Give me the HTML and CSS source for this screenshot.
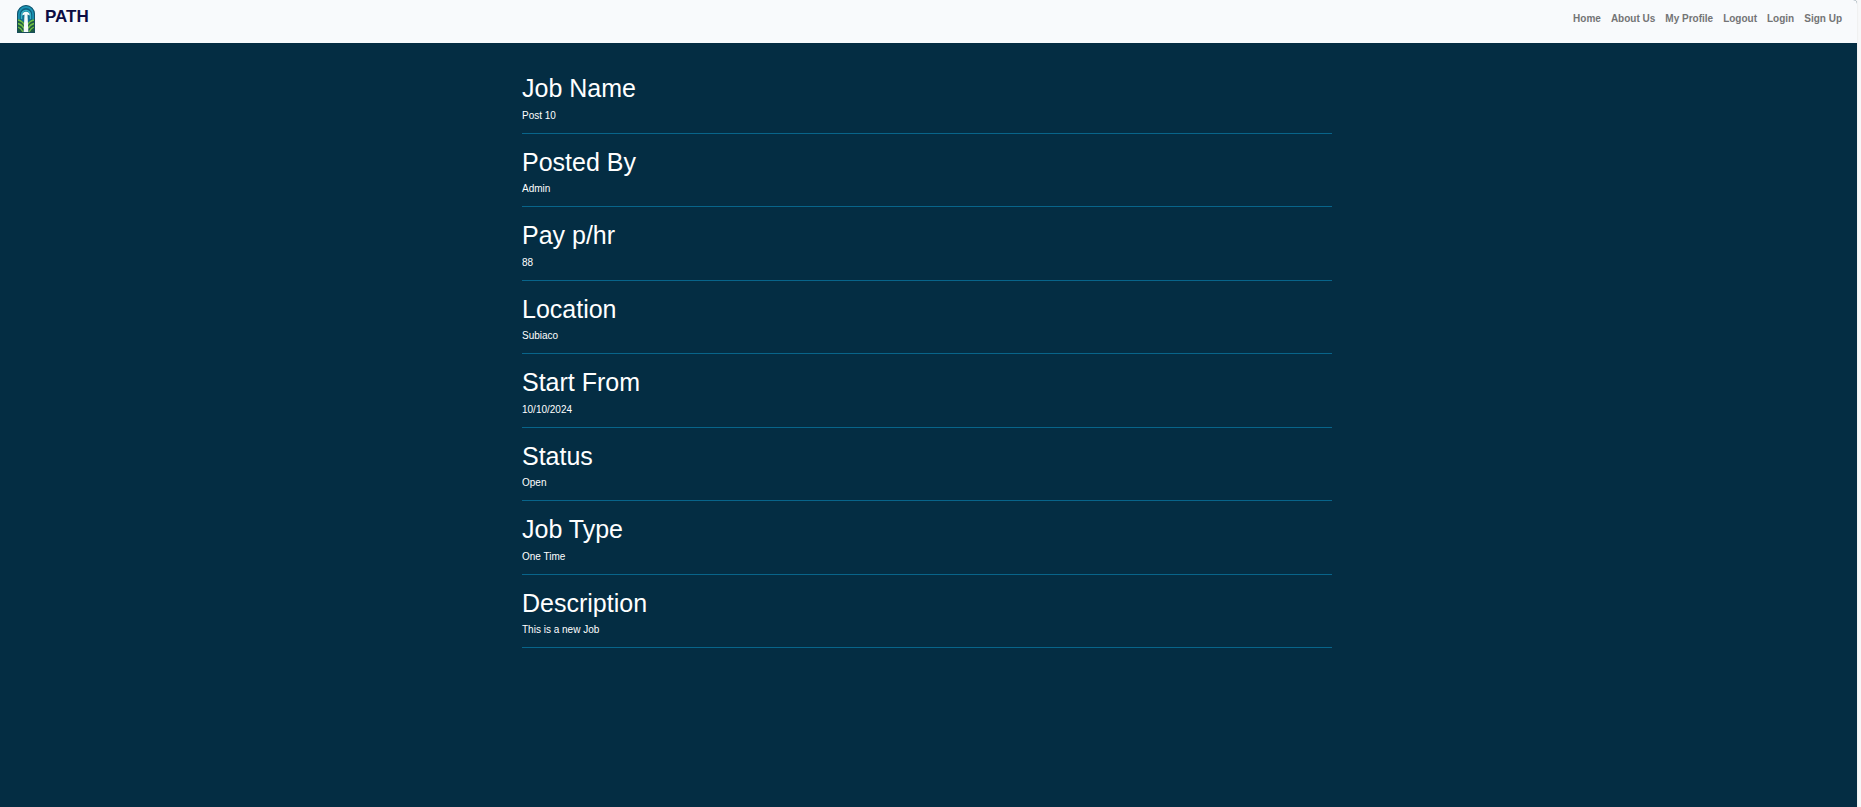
FILE: index.html
```html
<!DOCTYPE html>
<html lang="en">
<head>
<meta charset="utf-8">
<title>PATH</title>
<link rel="stylesheet" href="styles.css">
</head>
<body>
<div class="page">
<header class="navbar">
  <a class="brand" href="#">
    <svg class="logo" viewBox="0 0 18 28" aria-hidden="true">
      <defs><clipPath id="arch"><path d="M0 28V9a9 9 0 0 1 18 0v19z"/></clipPath></defs>
      <g clip-path="url(#arch)">
        <path fill="#12708f" d="M0 0h18v28H0z"/>
        <g fill="none">
          <path stroke="#1b93b4" stroke-width="1.8" d="M2 18V9a7 7 0 0 1 14 0v9"/>
          <path stroke="#0f5574" stroke-width=".7" d="M3.300 15V9.500a5.700 5.700 0 0 1 11.400 0V15"/>
          <path stroke="#35b3c8" stroke-width="1.4" d="M4.500 14V10a4.500 4.500 0 0 1 9 0v4"/>
        </g>
        <path fill="#1d5a44" d="M0 28V14q7 1 9 8 2-7 9-8v14z"/>
        <g fill="none" stroke="#6fc043" stroke-width="1.300">
          <path d="M1 15q5 1 7 6M1 18.500q4 1 6 5M1 22q3 1 5 5M17 15q-5 1-7 6M17 18.500q-4 1-6 5M17 22q-3 1-5 5"/>
        </g>
        <path fill="#f4fbfb" d="M5.300 10.500a3.700 3.700 0 0 1 7.400 0l-2.200-1 .9 17.500H6.600l.9-17.500z"/>
        <path fill="none" stroke="#174a60" stroke-width=".8" d="M.5 28V9a8.500 8.500 0 0 1 17 0v18.500H.5"/>
      </g>
    </svg>
    <span>PATH</span>
  </a>
  <nav class="links">
    <a href="#">Home</a>
    <a href="#">About Us</a>
    <a href="#">My Profile</a>
    <a href="#">Logout</a>
    <a href="#">Login</a>
    <a href="#">Sign Up</a>
  </nav>
</header>
<main class="content">
  <dl class="details">
    <div class="row"><dt>Job Name</dt><dd>Post 10</dd></div>
    <div class="row"><dt>Posted By</dt><dd>Admin</dd></div>
    <div class="row"><dt>Pay p/hr</dt><dd>88</dd></div>
    <div class="row"><dt>Location</dt><dd>Subiaco</dd></div>
    <div class="row"><dt>Start From</dt><dd>10/10/2024</dd></div>
    <div class="row"><dt>Status</dt><dd>Open</dd></div>
    <div class="row"><dt>Job Type</dt><dd>One Time</dd></div>
    <div class="row"><dt>Description</dt><dd>This is a new Job</dd></div>
  </dl>
</main>
</div>
</body>
</html>
```
FILE: styles.css
```css
* {
  box-sizing: border-box;
}

body {
  margin: 0;
  background: #f7f8f9;
  font-family: "Liberation Sans", Arial, sans-serif;
  font-size: 10px;
  line-height: 1.5;
}

.page {
  display: flex;
  flex-direction: column;
  min-height: 100vh;
  margin-right: 4px;
  border-top-right-radius: 4px;
  background: #042d43;
  box-shadow: 0 0 2px #dcdcdc;
}

.navbar {
  display: flex;
  justify-content: space-between;
  align-items: flex-start;
  padding: 5px 15px 10px 17px;
  border-top-right-radius: 4px;
  background: #f8fafc;
}

.brand {
  display: flex;
  gap: 10px;
  color: #0c0c43;
  font-size: 17px;
  font-weight: bold;
  line-height: 24px;
  text-decoration: none;
}

.logo {
  width: 18px;
  height: 28px;
}

.links {
  display: flex;
  gap: 10px;
  padding-top: 6px;
}

.links a {
  color: #737475;
  font-weight: bold;
  text-decoration: none;
}

.content {
  padding: 17px 3px 0 0;
}

.details {
  width: 100%;
  max-width: 810px;
  margin: 0 auto;
  color: #fff;
}

.row {
  padding: 13px 0 10px;
  border-bottom: 1px solid #08648a;
}

.row dt {
  margin-bottom: 4px;
  font-size: 25px;
  line-height: 1.22;
}

.row dd {
  margin: 0;
}
```
